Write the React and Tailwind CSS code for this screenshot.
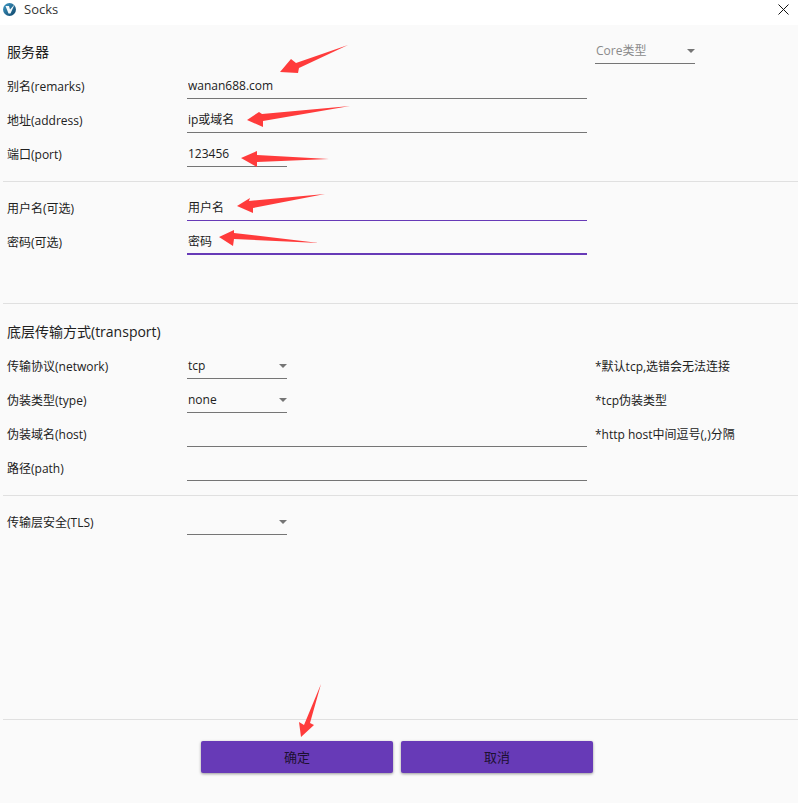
import React from "react";

const font = { fontFamily: '"Open Sans", "Noto Sans CJK SC", sans-serif' };

// red annotation arrows drawn over the form
const arrows = [
  "280,72 291,59 296,63 348,45 299,68 298,73",
  "247,120 259,112 262,114 350,106 263,121 263,127",
  "241,158 257,151 257,155 329,159 257,162 257,167",
  "237,206 250,198 249,201 325,194 253,208 253,213",
  "219,237 234,230 234,233 319,243 234,239 233,246",
  "301,737 299,722 304,725 321,684 310,723 314,725",
];

function Row({ label, children, right }) {
  return (
    <div className="flex h-[34px] text-[12px] text-[#212121]">
      <div className="w-[187px] pl-[7px] pt-[10px] flex items-center">{label}</div>
      <div className="w-[408px]">{children}</div>
      {right && <div className="pt-[10px] flex items-center whitespace-nowrap">{right}</div>}
    </div>
  );
}

function Field({ value, accent, thick, short }) {
  const width = short ? "w-[100px]" : "w-[400px]";
  const border = accent
    ? thick
      ? "border-b-2 border-[#673ab7]"
      : "border-b border-[#673ab7]"
    : "border-b border-[#757575]";
  return (
    <input
      readOnly
      defaultValue={value}
      className={`${width} ${border} block h-[26px] mt-[8px] pl-px pb-[1px] bg-transparent outline-none text-[12px] text-[#212121]`}
    />
  );
}

function Select({ value }) {
  return (
    <div className="w-[100px] h-[26px] mt-[8px] pl-px flex items-center justify-between border-b border-[#757575]">
      <span>{value}</span>
      <span className="w-0 h-0 border-x-[4px] border-x-transparent border-t-[4px] border-t-[#757575]" />
    </div>
  );
}

function Divider() {
  return <div className="ml-[3px] h-px bg-[#e0e0e0]" />;
}

function Logo() {
  return (
    <svg width="13" height="13" viewBox="0 0 13 13">
      <defs>
        <linearGradient id="logo" x1="0" y1="0" x2="1" y2="1">
          <stop offset="0" stopColor="#3f9ac6" />
          <stop offset="1" stopColor="#0f4468" />
        </linearGradient>
      </defs>
      <circle cx="6.5" cy="6.5" r="6.5" fill="url(#logo)" />
      <path d="M2.5 3 L5.5 10.5 L7.5 10.5 L11.5 1.5 L7 6.5 L6 3 Z" fill="#f4f8fa" />
    </svg>
  );
}

export default function App() {
  return (
    <div className="relative w-[798px] h-[803px] flex flex-col bg-[#fafafa] overflow-hidden" style={font}>
      <div className="h-[25px] pb-[6px] bg-white flex items-center shrink-0">
        <div className="ml-[3px] mr-[8px] flex"><Logo /></div>
        <span className="text-[13px] text-[#333333]">Socks</span>
        <svg className="ml-auto mr-[9px]" width="11" height="11" viewBox="0 0 11 11">
          <path d="M0.5 0.5 L10.5 10.5 M10.5 0.5 L0.5 10.5" stroke="#111" strokeWidth="1" fill="none" />
        </svg>
      </div>

      <div className="flex h-[40px] text-[#212121]">
        <div className="w-[595px] pl-[7px] pt-[17px] text-[14px] leading-[20px]">服务器</div>
        <div className="w-[100px] h-[39px] pt-[15px] pb-[2px] pl-px flex items-center justify-between border-b border-[#757575] text-[12px] text-[#8a8a8a]">
          <span>Core类型</span>
          <span className="w-0 h-0 border-x-[4px] border-x-transparent border-t-[4px] border-t-[#757575]" />
        </div>
      </div>
      <Row label="别名(remarks)"><Field value="wanan688.com" /></Row>
      <Row label="地址(address)"><Field value="ip或域名" /></Row>
      <Row label="端口(port)"><Field value="123456" short /></Row>
      <div className="h-[14px]" />
      <Divider />

      <div className="h-[5px]" />
      <Row label="用户名(可选)"><Field value="用户名" accent /></Row>
      <Row label="密码(可选)"><Field value="密码" accent thick /></Row>
      <div className="h-[48px]" />
      <Divider />

      <div className="h-[41px] pl-[7px] pt-[18px] text-[14px] leading-[20px] text-[#212121]">底层传输方式(transport)</div>
      <Row label="传输协议(network)" right="*默认tcp,选错会无法连接"><Select value="tcp" /></Row>
      <Row label="伪装类型(type)" right="*tcp伪装类型"><Select value="none" /></Row>
      <Row label="伪装域名(host)" right="*http host中间逗号(,)分隔"><Field value="" /></Row>
      <Row label="路径(path)"><Field value="" /></Row>
      <div className="h-[14px]" />
      <Divider />

      <div className="h-[5px]" />
      <Row label="传输层安全(TLS)"><Select value="" /></Row>
      <div className="flex-1" />
      <Divider />

      <div className="h-[83px] pt-[21px] pl-[201px] flex items-start gap-[8px] shrink-0">
        <button className="w-[192px] h-[32px] pt-[2px] rounded-[2px] bg-[#673ab7] text-[13px] text-[#1c1030] shadow-[0_1px_3px_rgba(0,0,0,0.4)]">确定</button>
        <button className="w-[192px] h-[32px] pt-[2px] rounded-[2px] bg-[#673ab7] text-[13px] text-[#1c1030] shadow-[0_1px_3px_rgba(0,0,0,0.4)]">取消</button>
      </div>

      <svg className="absolute left-0 top-0 pointer-events-none" width="798" height="803">
        {arrows.map((points) => (
          <polygon key={points} points={points} fill="#ff3b3b" />
        ))}
      </svg>
    </div>
  );
}
